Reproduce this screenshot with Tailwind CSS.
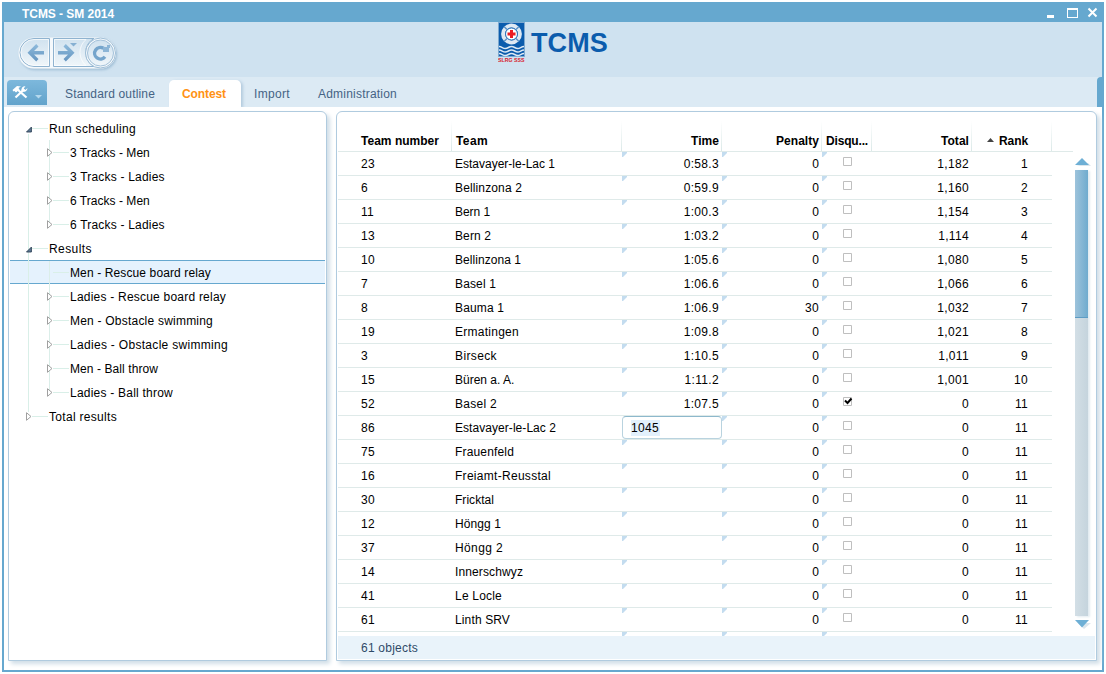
<!DOCTYPE html>
<html lang="en">
<head>
<meta charset="utf-8">
<title>TCMS - SM 2014</title>
<script src="https://cdn.jsdelivr.net/npm/@tailwindcss/browser@4"></script>
</head>
<body class="bg-white w-[1106px] h-[674px] overflow-hidden p-[2px] font-['Liberation_Sans',Arial,sans-serif] text-[12px] text-black">
<div class="relative w-[1102px] h-[670px] bg-white border-2 border-t-0 border-[#66a8cf] flex flex-col">
  <!-- title bar -->
  <header class="h-5 shrink-0 bg-[#66a8cf] flex items-center justify-between pl-[18px] pr-[4px] text-white">
    <span class="font-bold text-[12px] leading-5 pt-[4px]"><span data-b data-w="92">TCMS - SM 2014</span></span>
    <svg width="52" height="20" viewBox="0 0 52 20" fill="none" shape-rendering="crispEdges">
      <path d="M1 13h7v3H1z" fill="#fff"/>
      <path d="M21.500 6.500h10v9h-10zM21 7.500h11" stroke="#fff"/>
      <path d="M42.500 6.500l8 8M50.500 6.500l-8 8" stroke="#fff" stroke-width="2" shape-rendering="auto"/>
    </svg>
  </header>
  <!-- tool bar -->
  <div class="h-[55px] shrink-0 bg-[#cfe2f0] flex">
    <svg class="ml-[12px] mt-[13px] shrink-0" width="106" height="38" viewBox="16 35 106 38" fill="none">
      <defs>
        <linearGradient id="btn" x1="0" y1="0" x2="0" y2="1"><stop offset="0" stop-color="#d0e2ef"/><stop offset="1" stop-color="#f0f6fa"/></linearGradient>
        <linearGradient id="glyph" x1="0" y1="0" x2="0" y2="1"><stop offset="0" stop-color="#8fbbdc"/><stop offset="1" stop-color="#6595c0"/></linearGradient>
        <filter id="sh" x="-10%" y="-10%" width="120%" height="130%"><feDropShadow dx="1" dy="1.500" stdDeviation="1" flood-color="#7fa6c4" flood-opacity=".6"/></filter>
      </defs>
      <g filter="url(#sh)">
        <path d="M34 37.500H100.500a15.500 15.500 0 0 1 0 31H34a15.500 15.500 0 0 1 0-31z" fill="#f5f9fc"/>
      </g>
      <path d="M34 38.500h15.500v28H34a14 14 0 0 1 0-28zM53.500 38.500H94a16 16 0 0 0 0 28H53.500z" fill="url(#btn)" stroke="#8fb3d0"/>
      <path d="M34 39.500h14.500v26H34a13 13 0 0 1 0-26zM54.500 39.500H86a17 17 0 0 0 0 26H54.500z" stroke="#fff" stroke-opacity=".7"/>
      <circle cx="100.500" cy="53" r="15" fill="#f5f9fc" stroke="#9dbdd6"/>
      <circle cx="100.500" cy="53" r="13" fill="url(#btn)" stroke="#a3c1d9"/>
      <path d="M44 51v3.500H34l4.500 4.500-2.300 2.500-8.700-8.700 8.700-8.800 2.300 2.500L34 51z" fill="url(#glyph)"/>
      <path d="M58 51v3.500h10L63.500 59l2.300 2.500 8.700-8.700-8.700-8.800-2.300 2.500L68 51z" fill="url(#glyph)"/>
      <path d="M70 43h7l-3.500 3.500z" fill="#86b0d2"/>
      <path d="M103.500 48.300a5.800 5.800 0 1 0 1.500 8.500" stroke="#75a5cc" stroke-width="3.400"/>
      <path d="M103 52v-5h4v-2h3v3h-1v4z" fill="#8cb5d6"/>
    </svg>
    <div class="ml-[376px] flex">
      <svg class="shrink-0" width="27" height="41" viewBox="0 0 27 41">
        <path d="M.5 .5h26v34H.5z" fill="#0b5cad" stroke="#7da9d0"/>
        <circle cx="13.500" cy="12" r="8.400" fill="none" stroke="#dfe9f3" stroke-width="4"/>
        <path d="M6 4.500l3 3M21 4.500l-3 3M6 19.500l3-3M21 19.500l-3-3" stroke="#5b93c8" stroke-width="1.500"/>
        <circle cx="13.500" cy="12" r="6" fill="#fff" stroke="#2f74ba" stroke-width="1"/>
        <path d="M12 8h3v2.500h2.500v3H15V16h-3v-2.500H9.500v-3H12z" fill="#ec1c24"/>
        <path d="M1 24.500c3 0 3.500 2 6.300 2s3.400-2 6.200-2 3.500 2 6.200 2 3.300-2 6.300-2M1 28c3 0 3.500 2 6.300 2s3.400-2 6.200-2 3.500 2 6.200 2 3.300-2 6.300-2M1 31.500c3 0 3.500 2 6.300 2s3.400-2 6.200-2 3.500 2 6.200 2 3.300-2 6.300-2" fill="none" stroke="#dce9f4" stroke-width="1.500"/>
        <text x="0" y="40" font-size="5" font-weight="bold" fill="#d8232f" textLength="26.500" lengthAdjust="spacingAndGlyphs" font-family="Liberation Sans, Arial, sans-serif">SLRG SSS</text>
      </svg>
      <div class="ml-[6px] mt-[5px] font-bold text-[27px] leading-[32px] text-[#0b5cad]"><span data-b data-size="27" data-w="77">TCMS</span></div>
    </div>
  </div>
  <!-- tabs -->
  <nav class="relative h-[30px] shrink-0 bg-[#dceaf4] flex items-end pl-[3px] text-[#456384]">
    <div class="w-[40px] h-[25px] mb-[2px] rounded-t-[4px] bg-linear-to-b from-[#7db8dc] to-[#62a3cb]">
      <svg width="40" height="25" viewBox="0 0 40 25" fill="none">
        <path d="M10 9l9.500 8.500" stroke="#fff" stroke-width="2.200"/>
        <path d="M5.500 10l4.500-4 4 .5-2.500 1.500 1 1.500-3.500 3-1.500-1.500-1 .5z" fill="#fff"/>
        <path d="M8.500 17.500l8.500-8" stroke="#fff" stroke-width="2.200"/>
        <path d="M20.500 8l-2 2-1.800-1.500 1.800-2.300a3.700 3.700 0 0 0-4 4.800 3.700 3.700 0 0 0 6-3z" fill="#fff"/>
        <path d="M28 15h7l-3.500 3.500z" fill="#b5d9ee"/>
      </svg>
    </div>
    <div class="ml-[18px] w-[90px] whitespace-nowrap h-[27px] leading-[28px]"><span data-w="90">Standard outline</span></div>
    <div class="ml-[14px] w-[72px] h-[27px] leading-[28px] pl-[13px] rounded-t-[5px] bg-white font-bold text-[#ff9214] shadow-[2px_1px_3px_#b3cbde]"><span data-b data-w="44">Contest</span></div>
    <div class="ml-[13px] w-[36px] whitespace-nowrap h-[27px] leading-[28px]"><span data-w="36">Import</span></div>
    <div class="ml-[28px] h-[27px] leading-[28px]"><span data-w="79">Administration</span></div>
    <div class="absolute right-0 top-0 w-[5px] h-[30px] rounded-tl-[4px] bg-[#66a8cf]"></div>
  </nav>
  <!-- content -->
  <main class="relative flex-1 flex pt-[4px] pl-[4px] bg-white">
    <section class="relative w-[319px] h-[550px] shrink-0 rounded-t-[6px] bg-white border border-[#b0cbdf] shadow-[3px_3px_4px_#d0dee7] pt-[4px]">
      <div class="absolute z-10 left-[19px] top-[22px] w-px h-[278px] bg-[#d9efe8]"></div>
      <div class="absolute z-10 left-[40px] top-[28px] w-px h-[84px] bg-[#dbeee9]"></div>
      <div class="absolute z-10 left-[40px] top-[149px] w-px h-[131px] bg-[#dbeee9]"></div>
      <div id="tree"></div>
    </section>
    <section class="ml-[9px] w-[761px] h-[550px] shrink-0 rounded-t-[6px] bg-white border border-[#b0cbdf] shadow-[3px_3px_4px_#d0dee7] px-px flex flex-col">
      <div class="flex h-[524px] overflow-hidden">
        <div class="w-[735px]">
          <div id="head" class="h-[40px] grid grid-cols-[114px_170px_100px_100px_50px_100px_80px] border-b border-[#dfeae9] pt-[9px] font-bold"></div>
          <div id="rows" class="w-[714px]"></div>
        </div>
        <div class="pl-[2px] pt-[46px]">
          <svg class="block" width="16" height="12" viewBox="0 0 16 12"><path d="M1 8h15l-3-3" fill="#dbe6ed"/><path d="M0 7l7-7 7 7z" fill="#6eafd5"/></svg>
          <div class="w-[13px] h-[446px] bg-linear-to-r from-[#d3dfe6] to-[#c5d4dd] shadow-[2px_1px_2px_#e2ebf0]"><div class="h-[148px] bg-linear-to-r from-[#9dc3db] to-[#6fabce] border-b border-[#5d9cc4]"></div></div>
          <svg class="block mt-[4px]" width="16" height="10" viewBox="0 0 16 10"><path d="M3 3h13L9 9z" fill="#dbe6ed"/><path d="M0 0h14L7 7.500z" fill="#6eafd5"/></svg>
        </div>
      </div>
      <footer class="h-[23px] bg-[#e9f3fa] pl-[23px] leading-[24px] text-[#2f4a68]"><span data-w="57">61 objects</span></footer>
    </section>
  </main>
</div>
<script>
const tree = [
  [0,'open','Run scheduling',87],[1,'closed','3 Tracks - Men',80],[1,'closed','3 Tracks - Ladies',95],
  [1,'closed','6 Tracks - Men',80],[1,'closed','6 Tracks - Ladies',95],[0,'open','Results',43],
  [1,'sel','Men - Rescue board relay',141],[1,'closed','Ladies - Rescue board relay',156],
  [1,'closed','Men - Obstacle swimming',143],[1,'closed','Ladies - Obstacle swimming',158],
  [1,'closed','Men - Ball throw',88],[1,'closed','Ladies - Ball throw',103],[0,'closed','Total results',68]];
const icon = {
  open: '<svg class="relative z-20 top-px" width="7" height="7" viewBox="0 0 7 7"><path d="M1.500 6h4.900v-4.900z" fill="#5c7a94" stroke="#2c4056" stroke-width=".9"/></svg>',
  closed: '<svg class="relative z-20" width="7" height="9" viewBox="0 0 7 9"><path d="M1.500 .7v7.600l4.500-3.800z" fill="#fff" stroke="#a0a0a0"/></svg>',
  sel: '<span class="w-[7px]"></span>'};
document.getElementById('tree').innerHTML = tree.map(([lv, k, t, w]) =>
  `<div class="h-[24px] mx-px flex items-center ${lv ? 'pl-[36px]' : 'pl-[15px]'} ${k === 'sel' ? 'bg-[#e5f2fd] border-y border-[#66a8cf]' : ''}">${icon[k]}<span class="h-px w-[16px] bg-[#d9efe8] mr-px"></span><span class="pt-[2px]" data-w="${w}">${t}</span></div>`).join('');

const sep = '<span class="absolute right-0 top-0 w-px h-[30px] bg-linear-to-b from-white to-[#dbe9e8]"></span>';
const heads = [['pl-[23px]','Team number',78],['pl-[4px]','Team',32],['pr-[3px] text-right','Time',28],['pr-[3px] text-right','Penalty',43],
  ['pl-[4px]','Disqu...',42],['pr-[3px] text-right','Total',28],['pr-[24px] text-right','Rank',29]];
document.getElementById('head').innerHTML = heads.map(([c, t, w], i) =>
  `<div class="relative h-[30px] leading-[41px] whitespace-nowrap ${c}">${i === 6 ? '<svg class="inline-block mr-[5px] mb-[3px]" width="7" height="4" viewBox="0 0 7 4"><path d="M0 4l3.500-4 3.500 4z" fill="#444"/></svg>' : ''}<span data-b data-w="${w}">${t}</span>${sep}</div>`).join('');

const data = [
  [23,'Estavayer-le-Lac 1','0:58.3',0,'1,182',1,100],[6,'Bellinzona 2','0:59.9',0,'1,160',2,67],[11,'Bern 1','1:00.3',0,'1,154',3,35],
  [13,'Bern 2','1:03.2',0,'1,114',4,36],[10,'Bellinzona 1','1:05.6',0,'1,080',5,66],[7,'Basel 1','1:06.6',0,'1,066',6,41],
  [8,'Bauma 1','1:06.9',30,'1,032',7,49],[19,'Ermatingen','1:09.8',0,'1,021',8,64],[3,'Birseck','1:10.5',0,'1,011',9,42],
  [15,'Büren a. A.','1:11.2',0,'1,001',10,60],[52,'Basel 2','1:07.5',0,'0',11,42],[86,'Estavayer-le-Lac 2','',0,'0',11,101],
  [75,'Frauenfeld','',0,'0',11,59],[16,'Freiamt-Reusstal','',0,'0',11,96],[30,'Fricktal','',0,'0',11,39],[12,'Höngg 1','',0,'0',11,46],
  [37,'Höngg 2','',0,'0',11,48],[14,'Innerschwyz','',0,'0',11,68],[41,'Le Locle','',0,'0',11,47],[61,'Linth SRV','',0,'0',11,55]];
const corner = '<svg class="absolute left-0 top-0" width="5" height="5" viewBox="0 0 5 5"><path d="M0 0h5v1L1 5H0z" fill="#c3dcef"/></svg>';
const num = 'tracking-[0.33px]';
const cols = 'grid grid-cols-[114px_170px_100px_100px_50px_100px_80px]';
document.getElementById('rows').innerHTML = data.map(([n, t, time, p, tot, r, w], i) => `
  <div class="${cols} h-[24px] leading-[24px] border-b border-[#dfeae9]">
    <div class="pl-[23px] ${num}">${n}</div><div class="pl-[3px]"><span data-w="${w}">${t}</span></div>
    <div class="relative pr-[3px] text-right ${num}">${i === 11 ? '<div class="absolute left-0 top-0 w-[100px] h-[23px] rounded-[4px] border border-[#b9d3df] border-t-[#8db8cc] bg-white text-left pl-[8px] pt-[3px]"><span class="block w-[29px] h-[16px] leading-[17px] bg-[#e2f0fc]">1045</span></div>' : corner + time}</div>
    <div class="relative pr-[3px] text-right">${corner}${p === 30 ? '<span class="tracking-[0.33px]">30</span>' : p}</div>
    <div class="relative">${corner}<svg class="absolute left-[21px] top-[4px]" width="11" height="11" viewBox="0 0 11 11" fill="none"><path d="M.5 1.500h8v8h-8z" fill="#fff" stroke="#bfbfbf"/>${i === 10 ? '<path d="M2 4.500l2.500 2.500 4-4.500" stroke="#000" stroke-width="2"/>' : ''}</svg></div>
    <div class="pr-[3px] text-right ${num}">${tot}</div><div class="pr-[24px] text-right ${num}">${r}</div>
  </div>`).join('') + `<div class="${cols} h-[4px] overflow-hidden"><div></div><div></div><div class="relative">${corner}</div><div class="relative">${corner}</div><div class="relative">${corner}</div></div>`;

// Spread each label's letters to its set width.
const pen = document.createElement('canvas').getContext('2d');
document.querySelectorAll('[data-w]').forEach(e => {
  pen.font = `${'b' in e.dataset ? 'bold ' : ''}${e.dataset.size || 12}px "Liberation Sans"`;
  const s = e.textContent;
  e.style.letterSpacing = ((+e.dataset.w - pen.measureText(s).width) / s.length).toFixed(3) + 'px';
});
</script>
</body>
</html>
